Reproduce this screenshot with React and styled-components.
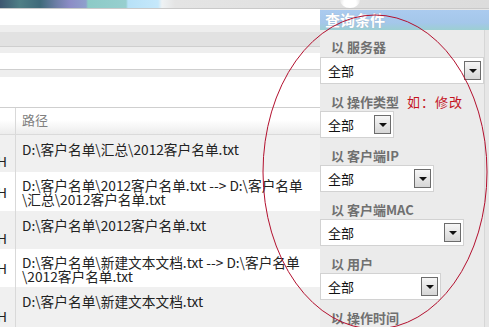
import styled, { createGlobalStyle } from "styled-components";

const GlobalStyle = createGlobalStyle`
  html, body {
    margin: 0;
    padding: 0;
    overflow: hidden;
    background: #ffffff;
  }
  #root {
    width: 489px;
    height: 327px;
  }
`;

const FONT = `"Noto Sans CJK SC", "Noto Sans", "Liberation Sans", sans-serif`;

const Page = styled.div`
  position: relative;
  width: 489px;
  height: 327px;
  overflow: hidden;
  display: flex;
  flex-direction: column;
  font-family: ${FONT};
  font-size: 13px;
  color: #222;
`;

const Banner = styled.div`
  height: 8px;
  flex: none;
  display: flex;
  padding-left: 340px;
  border-bottom: 1px solid #c9c9c9;
  box-sizing: content-box;
  background: linear-gradient(
    90deg,
    #3d5670 0px,
    #4f7f86 20px,
    #3f6a7a 40px,
    #6f7fa8 57px,
    #8c8cc6 70px,
    #8fa0cc 86px,
    #8ccac6 88px,
    #97cfcf 126px,
    #b7e1f7 128px,
    #c5e8fb 158px,
    #eef2f4 162px,
    #e4e4e4 175px,
    #dcdcdc 489px
  );
`;

const Knob = styled.div`
  width: 20px;
  height: 16px;
  margin-top: -8px;
  border-radius: 50%;
  background: radial-gradient(circle at 50% 70%, #ffffff 40%, #d0d0d0 100%);
`;

const Body = styled.div`
  flex: 1;
  display: flex;
  min-height: 0;
`;

const Main = styled.div`
  width: 320px;
  flex: none;
  display: flex;
  flex-direction: column;
  overflow: hidden;
`;

const SearchLine = styled.div`
  height: 16px;
  background: #fff;
`;

const Toolbar = styled.div`
  height: 21px;
  border-bottom: 1px solid #cfcfcf;
  background: linear-gradient(#eeeeee 0 7px, #e2e2e2 7px);
`;

const Strip = styled.div`
  height: ${(p) => p.$h}px;
  border-bottom: 1px solid #cfcfcf;
  background: linear-gradient(#eeeeee 0 ${(p) => p.$band}px, #ffffff ${(p) => p.$band}px);
`;

const TableHead = styled.div`
  height: 26px;
  display: flex;
  border-bottom: 1px solid #dadada;
  background: linear-gradient(#ffffff 0 12px, #ececec 26px);
`;

const Row = styled.div`
  height: ${(p) => p.$h}px;
  display: flex;
  background: ${(p) => (p.$alt ? "#f0f0f0" : "#ffffff")};
`;

const LeadCell = styled.div`
  width: 16px;
  flex: none;
  border-right: 1px solid #d9d9d9;
  display: flex;
  align-items: ${(p) => (p.$center ? "center" : "flex-end")};
  padding-bottom: ${(p) => (p.$center ? 0 : 4)}px;
  box-sizing: border-box;
  overflow: hidden;
  line-height: 14px;
  font-size: 13.7px;
  color: #222;
`;

const Clip = styled.span`
  margin-left: -3px;
`;

const HeadCell = styled.div`
  padding: 3px 0 0 6px;
  line-height: 18px;
  color: #808080;
`;

const PathCell = styled.div`
  flex: 1;
  padding: ${(p) => (p.$two ? 6 : 8)}px 0 0 6px;
  line-height: ${(p) => (p.$two ? 14 : 13)}px;
  font-size: 13.7px;
  white-space: nowrap;
  overflow: hidden;
`;

const Panel = styled.div`
  flex: 1;
  display: flex;
  flex-direction: column;
  padding-top: 1px;
  background: #e6e6e6;
`;

const PanelTitle = styled.div`
  height: 20px;
  flex: none;
  padding-left: 5px;
  line-height: 20px;
  font-size: 15px;
  font-weight: bold;
  color: #fff;
  text-shadow: 0 0 1px #9ab;
  background: linear-gradient(#abcbef 0, #a4c7ea 65%, #9ccfd2 100%);
`;

const PanelBody = styled.div`
  flex: 1;
  width: 164px;
  border-right: 1px solid #d6d6d6;
  background: #ebebeb;
  display: flex;
  flex-direction: column;
`;

const Label = styled.div`
  height: 27px;
  box-sizing: border-box;
  padding: ${(p) => (p.$first ? 9 : 10)}px 0 0 11px;
  line-height: 15px;
  font-weight: bold;
  color: #707070;
  display: flex;
  gap: 8px;
`;

const Hint = styled.span`
  font-weight: normal;
  color: #c4141e;
  letter-spacing: 1px;
`;

const Select = styled.div`
  width: ${(p) => p.$w}px;
  height: 27px;
  box-sizing: border-box;
  border: 1px solid #d2d2d2;
  background: #fff;
  display: flex;
  align-items: center;
  justify-content: space-between;
  padding: 0 2px 0 7px;
  color: #111;
`;

const DropButton = styled.div`
  width: 17px;
  height: 19px;
  box-sizing: border-box;
  border: 1px solid #6c6c6c;
  background: linear-gradient(#f6f6f6, #d6d6d6);
  display: flex;
  align-items: center;
  justify-content: center;

  &::after {
    content: "";
    border-left: 4px solid transparent;
    border-right: 4px solid transparent;
    border-top: 4px solid #111;
  }
`;

const Annotation = styled.svg`
  position: absolute;
  left: 0;
  top: 0;
  pointer-events: none;
`;

const rows = [
  { h: 38, lines: ["D:\\客户名单\\汇总\\2012客户名单.txt"] },
  {
    h: 39,
    lines: ["D:\\客户名单\\2012客户名单.txt --> D:\\客户名单", "\\汇总\\2012客户名单.txt"],
  },
  { h: 38, lines: ["D:\\客户名单\\2012客户名单.txt"] },
  {
    h: 39,
    lines: ["D:\\客户名单\\新建文本文档.txt --> D:\\客户名单", "\\2012客户名单.txt"],
  },
  { h: 40, lines: ["D:\\客户名单\\新建文本文档.txt"] },
];

const filters = [
  { label: "以 服务器", width: 164 },
  { label: "以 操作类型", width: 74, hint: "如：修改" },
  { label: "以 客户端IP", width: 114 },
  { label: "以 客户端MAC", width: 144 },
  { label: "以 用户", width: 121 },
];

const App = () => {
  return (
    <>
      <GlobalStyle />
      <Page>
        <Banner>
          <Knob />
        </Banner>
        <Body>
          <Main>
            <SearchLine />
            <Toolbar />
            <Strip $h={23} $band={6} />
            <Strip $h={37} $band={7} />
            <TableHead>
              <LeadCell $center />
              <HeadCell>路径</HeadCell>
            </TableHead>
            {rows.map((r, i) => (
              <Row key={i} $h={r.h} $alt={i % 2 === 0}>
                <LeadCell $center={r.lines.length > 1}>
                  <Clip>H</Clip>
                </LeadCell>
                <PathCell $two={r.lines.length > 1}>
                  {r.lines.map((l, j) => (
                    <div key={j}>{l}</div>
                  ))}
                </PathCell>
              </Row>
            ))}
          </Main>
          <Panel>
            <PanelTitle>查询条件</PanelTitle>
            <PanelBody>
              {filters.map((f, i) => (
                <div key={f.label}>
                  <Label $first={i === 0}>
                    <span>{f.label}</span>
                    {f.hint && <Hint>{f.hint}</Hint>}
                  </Label>
                  <Select $w={f.width}>
                    <span>全部</span>
                    <DropButton />
                  </Select>
                </div>
              ))}
              <Label>
                <span>以 操作时间</span>
              </Label>
            </PanelBody>
          </Panel>
        </Body>
        <Annotation width="489" height="327" viewBox="0 0 489 327">
          <ellipse
            cx="375"
            cy="172"
            rx="112"
            ry="157"
            fill="none"
            stroke="#b3102e"
            strokeWidth="1"
          />
        </Annotation>
      </Page>
    </>
  );
};

export default App;
